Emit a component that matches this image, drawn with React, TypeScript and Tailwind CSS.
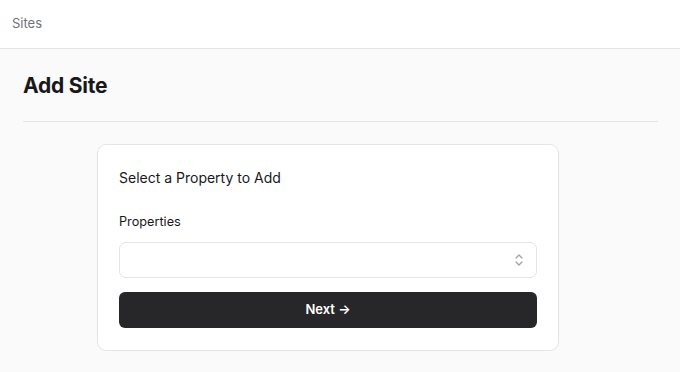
export default function App() {
  return (
    <div className="min-h-screen bg-[#fafafa] font-['Inter',sans-serif] text-[#18181b]">
      <header className="h-[49px] bg-white border-b border-[#e4e4e7] flex items-center px-3">
        <span className="text-[13px] text-[#71717a]">Sites</span>
      </header>

      <main className="pl-[23px] pr-[22px]">
        <div className="pt-[24px] pb-[22px] border-b border-[#e4e4e7]">
          <h1 className="text-[21px] leading-[26px] font-bold tracking-[-0.01em]">Add Site</h1>
        </div>

        <div className="mt-[22px] ml-[74px] w-[462px] bg-white border border-[#e4e4e7] rounded-[9px] px-[21px] pt-[23px] pb-[22px]">
          <h2 className="text-[14px] leading-[20px]">Select a Property to Add</h2>

          <label className="block mt-[25px] text-[12.7px] leading-[18px]">Properties</label>
          <div className="mt-[11px] h-[36px] border border-[#e4e4e7] rounded-[7px] flex items-center justify-end pr-[12px]">
            <svg width="10" height="16" viewBox="0 0 10 16" fill="none" stroke="#a1a1aa" strokeWidth="1.3" strokeLinecap="round" strokeLinejoin="round">
              <path d="M2 6 L5 3 L8 6" />
              <path d="M2 10 L5 13 L8 10" />
            </svg>
          </div>

          <button className="mt-[14px] w-full h-[36px] bg-[#27272a] rounded-[6px] text-white text-[13px] font-semibold flex items-center justify-center">
            Next →
          </button>
        </div>
      </main>
    </div>
  );
}
